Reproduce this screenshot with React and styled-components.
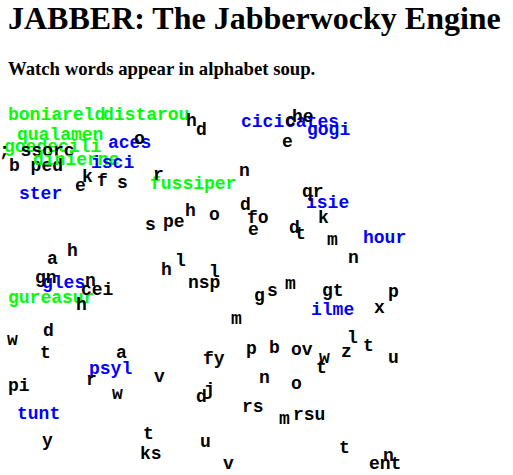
import React from 'react';
import styled, { createGlobalStyle } from 'styled-components';

const GlobalStyle = createGlobalStyle`
  html, body { margin: 0; padding: 0; background: #fff; }
  body { padding: 0 8px; font-family: "Liberation Serif", "Times New Roman", serif; color: #000; }
`;

const Title = styled.h1` font-size: 32px; font-weight: bold; margin: 0 0 21.44px; line-height: normal; white-space: nowrap; `;
const Subtitle = styled.h3` font-size: 18.72px; font-weight: bold; margin: 0 0 18.72px; line-height: normal; `;
const Soup = styled.div` position: relative; height: 377px; margin: 0 -8px; overflow: hidden; `;
const Letter = styled.span`
  position: absolute;
  font-family: "Liberation Mono", "Courier New", monospace;
  font-weight: bold;
  font-size: 18px;
  line-height: 18px;
  white-space: pre;
  color: ${({ $tone }) => ($tone === 'g' ? '#00ff00' : $tone === 'b' ? '#0000ff' : '#000')};
`;

// [text, x, baseline, tone] in page coordinates
const words = [
  ['boniareld', 8, 119, 'g'],
  ['distarou', 103, 119, 'g'],
  ['goedecili', 4, 151, 'g'],
  ['; ssorc', -1, 155, 'k'],
  ['qualamen', 17, 139, 'g'],
  ['b ped', 9, 170, 'k'],
  ['dinierne', 33, 164, 'g'],
  ['fussiper', 150, 188, 'g'],
  ['gureasur', 8, 302, 'g'],
  ['cici', 241, 126, 'b'],
  ['cates', 285, 126, 'b'],
  ['gogi', 307, 134, 'b'],
  ['aces', 108, 147, 'b'],
  ['isci', 91, 167, 'b'],
  ['ster', 19, 198, 'b'],
  ['isie', 306, 207, 'b'],
  ['hour', 363, 242, 'b'],
  ['gles', 42, 287, 'b'],
  ['ilme', 311, 314, 'b'],
  ['psyl', 89, 373, 'b'],
  ['tunt', 17, 418, 'b'],
  ['h', 186, 125, 'k'],
  ['he', 292, 121, 'k'],
  ['c', 285, 125, 'k'],
  ['d', 196, 134, 'k'],
  ['o', 134, 143, 'k'],
  ['e', 282, 146, 'k'],
  ['n', 239, 175, 'k'],
  ['r', 153, 179, 'k'],
  ['k', 82, 181, 'k'],
  ['f', 97, 185, 'k'],
  ['s', 117, 187, 'k'],
  ['e', 75, 190, 'k'],
  ['qr', 302, 196, 'k'],
  ['d', 240, 209, 'k'],
  ['h', 185, 215, 'k'],
  ['o', 209, 219, 'k'],
  ['fo', 247, 222, 'k'],
  ['k', 318, 222, 'k'],
  ['pe', 163, 226, 'k'],
  ['s', 145, 229, 'k'],
  ['d', 289, 232, 'k'],
  ['e', 248, 234, 'k'],
  ['t', 295, 238, 'k'],
  ['m', 327, 244, 'k'],
  ['h', 67, 255, 'k'],
  ['n', 348, 262, 'k'],
  ['a', 47, 263, 'k'],
  ['l', 175, 265, 'k'],
  ['h', 161, 274, 'k'],
  ['l', 209, 276, 'k'],
  ['gn', 35, 282, 'k'],
  ['n', 85, 285, 'k'],
  ['nsp', 188, 287, 'k'],
  ['m', 285, 288, 'k'],
  ['s', 267, 295, 'k'],
  ['gt', 322, 295, 'k'],
  ['cei', 81, 294, 'k'],
  ['p', 388, 296, 'k'],
  ['g', 254, 300, 'k'],
  ['h', 76, 309, 'k'],
  ['x', 374, 312, 'k'],
  ['m', 231, 323, 'k'],
  ['d', 43, 335, 'k'],
  ['l', 347, 342, 'k'],
  ['w', 7, 344, 'k'],
  ['t', 363, 350, 'k'],
  ['b', 269, 352, 'k'],
  ['p', 246, 353, 'k'],
  ['ov', 291, 354, 'k'],
  ['z', 341, 356, 'k'],
  ['t', 40, 357, 'k'],
  ['a', 116, 357, 'k'],
  ['w', 319, 362, 'k'],
  ['u', 388, 362, 'k'],
  ['fy', 203, 363, 'k'],
  ['t', 316, 372, 'k'],
  ['v', 154, 381, 'k'],
  ['n', 259, 382, 'k'],
  ['r', 86, 384, 'k'],
  ['o', 291, 388, 'k'],
  ['pi', 8, 390, 'k'],
  ['j', 204, 394, 'k'],
  ['w', 112, 398, 'k'],
  ['d', 196, 401, 'k'],
  ['rs', 242, 411, 'k'],
  ['rsu', 293, 419, 'k'],
  ['m', 279, 423, 'k'],
  ['t', 143, 438, 'k'],
  ['y', 42, 445, 'k'],
  ['u', 200, 446, 'k'],
  ['t', 339, 452, 'k'],
  ['ks', 140, 458, 'k'],
  ['n', 383, 460, 'k'],
  ['v', 223, 468, 'k'],
  ['ent', 369, 468, 'k'],
];

const SOUP_TOP = 98;
const BASELINE = 14;

export default function App() {
  return (
    <>
      <GlobalStyle />
      <Title>JABBER: The Jabberwocky Engine</Title>
      <Subtitle>Watch words appear in alphabet soup.</Subtitle>
      <Soup>
        {words.map(([text, x, y, tone], i) => (
          <Letter key={i} $tone={tone} style={{ left: x, top: y - SOUP_TOP - BASELINE }}>
            {text}
          </Letter>
        ))}
      </Soup>
    </>
  );
}
